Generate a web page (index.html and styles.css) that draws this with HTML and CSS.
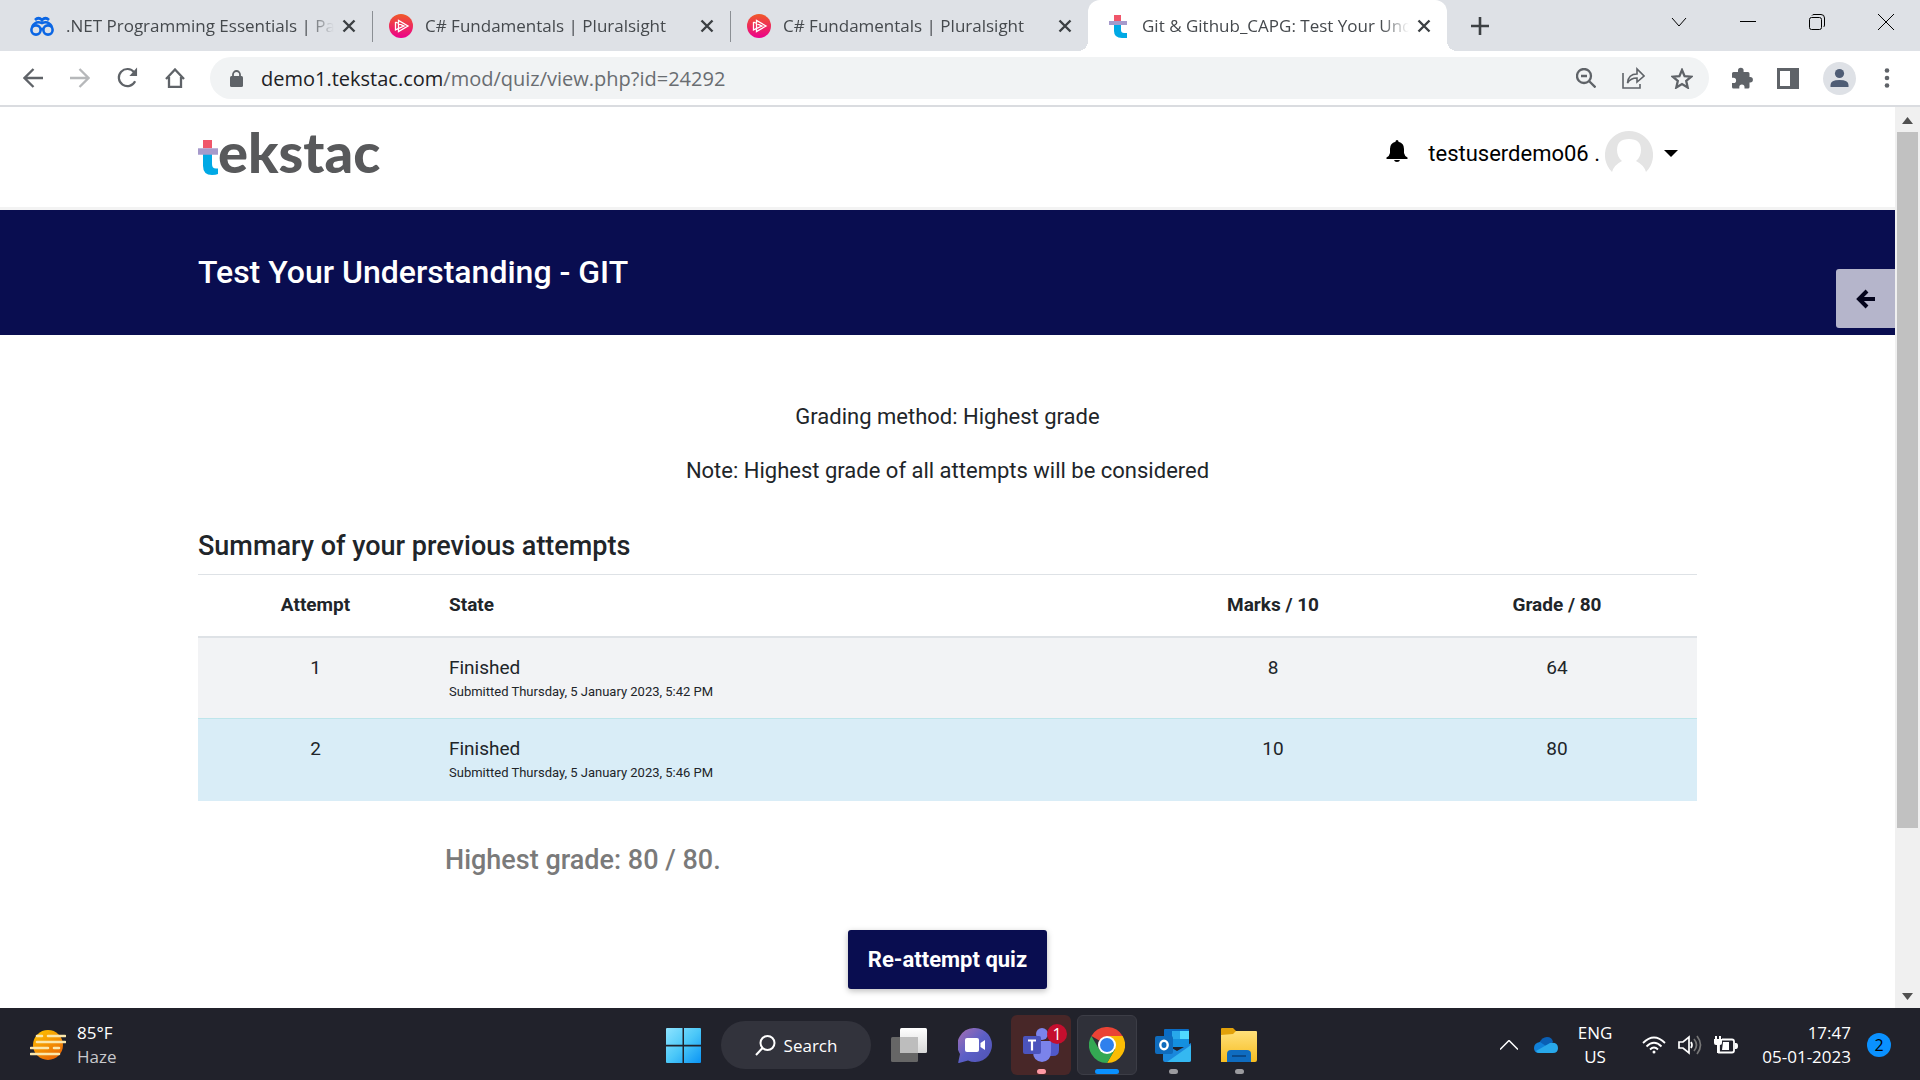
FILE: index.html
```html
<!DOCTYPE html>
<html lang="en">
<head>
<meta charset="utf-8">
<title>Git &amp; Github_CAPG: Test Your Understanding - GIT</title>
<link rel="stylesheet" href="styles.css">
</head>
<body>
<svg width="0" height="0" class="defs" aria-hidden="true">
  <defs>
    <linearGradient id="ps" x1="0" y1="0" x2="0" y2="1"><stop offset="0" stop-color="#f05a28"/><stop offset="1" stop-color="#ec008c"/></linearGradient>
    <linearGradient id="win" gradientUnits="userSpaceOnUse" x1="0" y1="0" x2="35" y2="35"><stop offset="0" stop-color="#8ee4ff"/><stop offset="0.5" stop-color="#4cc8f8"/><stop offset="1" stop-color="#0a94f5"/></linearGradient>
    <linearGradient id="chat" x1="0" y1="0" x2="1" y2="1"><stop offset="0" stop-color="#a86fb0"/><stop offset="0.5" stop-color="#5b5fc7"/><stop offset="1" stop-color="#4f52b2"/></linearGradient>
    <linearGradient id="sun" x1="0" y1="0" x2="0.6" y2="1"><stop offset="0" stop-color="#ffc800"/><stop offset="1" stop-color="#ea6a05"/></linearGradient>
    <linearGradient id="fold" x1="0" y1="0" x2="0" y2="1"><stop offset="0" stop-color="#ffe07a"/><stop offset="1" stop-color="#f7bd20"/></linearGradient>
    <linearGradient id="light" x1="0" y1="0" x2="0" y2="1"><stop offset="0" stop-color="#fff"/><stop offset="1" stop-color="#d8d8d8"/></linearGradient>
    <symbol id="x" viewBox="0 0 14 14"><path d="M1.500 1.500l11 11M12.500 1.500l-11 11" stroke="#3c4043" stroke-width="2.400" fill="none"/></symbol>
    <symbol id="play" viewBox="0 0 24 24"><circle cx="12" cy="12" r="12" fill="url(#ps)"/><path d="M6.500 8v8l3-1.600M9.500 6.500v11L19 12zM6.500 8L15 12l-8.500 4M9.500 9.500l5 2.500-5 2.500" fill="none" stroke="#fff" stroke-width="1.300"/></symbol>
  </defs>
</svg>
<div class="screen">
  <header class="browser">
    <div class="tabs">
      <div class="tab">
        <svg class="fav" viewBox="0 0 24 24" fill="none" stroke="#0b66e4" stroke-width="2.600"><circle cx="6" cy="16" r="4.600"/><circle cx="18" cy="16" r="4.600"/><path d="M10.500 15h3M2 13C4 9 7 7 12 9c5-2 8 0 10 4M5 6c3-3 5-2 7 0 2-2 4-3 7 0"/></svg>
        <span class="tab-title">.NET Programming Essentials | Path</span>
        <button class="bare" aria-label="Close tab"><svg class="x"><use href="#x"/></svg></button>
      </div>
      <div class="tab">
        <svg class="fav"><use href="#play"/></svg>
        <span class="tab-title">C# Fundamentals | Pluralsight</span>
        <button class="bare" aria-label="Close tab"><svg class="x"><use href="#x"/></svg></button>
      </div>
      <div class="tab">
        <svg class="fav"><use href="#play"/></svg>
        <span class="tab-title">C# Fundamentals | Pluralsight</span>
        <button class="bare" aria-label="Close tab"><svg class="x"><use href="#x"/></svg></button>
      </div>
      <div class="tab active">
        <svg class="fav" viewBox="0 0 24 24"><path fill="#f0566a" d="M8 1h7v6H8z"/><path fill="#00a9e5" d="M8 9h7v7q0 3 3 3h3v5h-5q-8 0-8-7z"/><path fill="#a69acb" d="M3 7h18v4H3z"/></svg>
        <span class="tab-title">Git &amp; Github_CAPG: Test Your Understanding</span>
        <button class="bare" aria-label="Close tab"><svg class="x"><use href="#x"/></svg></button>
      </div>
      <button class="bare new-tab" aria-label="New tab"><svg width="18" height="18" viewBox="0 0 18 18"><path d="M9 0v18M0 9h18" stroke="#3c4043" stroke-width="2.600"/></svg></button>
      <div class="window-buttons">
        <button class="bare" aria-label="Search tabs"><svg width="16" height="16" viewBox="0 0 16 16"><path d="M1 4l7 8 7-8" class="thin"/></svg></button>
        <button class="bare" aria-label="Minimize"><svg width="16" height="16" viewBox="0 0 16 16"><path d="M0 7.500h16" class="thin"/></svg></button>
        <button class="bare" aria-label="Restore"><svg width="16" height="16" viewBox="0 0 16 16"><rect x="0.500" y="3.500" width="12" height="12" rx="2" class="thin"/><path d="M3 1.500Q3.500.5 5 .5h7q3.500 0 3.500 3.500v7q0 1.500-1 2" class="thin"/></svg></button>
        <button class="bare" aria-label="Close"><svg width="16" height="16" viewBox="0 0 16 16"><path d="M0 0l16 16M16 0L0 16" class="thin"/></svg></button>
      </div>
    </div>
    <div class="toolbar">
      <div class="nav">
        <button class="bare" aria-label="Back"><svg width="20" height="20" viewBox="0 0 20 20"><path d="M20 10H2M10.500 1L1.500 10l9 9" class="line"/></svg></button>
        <button class="bare faded" aria-label="Forward"><svg width="20" height="20" viewBox="0 0 20 20"><path d="M0 10h18M9.500 1l9 9-9 9" class="line"/></svg></button>
        <button class="bare" aria-label="Reload"><svg width="21" height="22" viewBox="0 0 22 22"><path d="M19 14.500A9 9 0 1 1 18 5" class="line"/><path d="M21 0v9h-8z" fill="#5f6368"/></svg></button>
        <button class="bare" aria-label="Home"><svg width="20" height="20" viewBox="0 0 20 20"><path d="M1 11l9-9.500L19 11M4 9v10h12V9" class="line"/></svg></button>
      </div>
      <div class="omnibox">
        <svg width="13" height="17" viewBox="0 0 13 17"><rect y="6" width="13" height="11" rx="1.500" fill="#5f6368"/><path d="M3 7V4.500a3.500 3.500 0 0 1 7 0V7" fill="none" stroke="#5f6368" stroke-width="1.800"/></svg>
        <span class="url"><b>demo1.tekstac.com</b>/mod/quiz/view.php?id=24292</span>
        <button class="bare" aria-label="Zoom"><svg width="20" height="20" viewBox="0 0 20 20"><circle cx="8" cy="8" r="7" class="line"/><path d="M13 13l6.500 6.500M5 8h6" class="line"/></svg></button>
        <button class="bare" aria-label="Share"><svg width="23" height="22" viewBox="0 0 23 22"><path d="M1 6v15h17v-4M5.500 16C6 10 9 7 15 7V2l7 7-7 6v-4c-4 0-7 1-9.500 5z" fill="none" stroke="#5f6368" stroke-width="1.600"/></svg></button>
        <button class="bare" aria-label="Bookmark"><svg width="22" height="21" viewBox="0 0 22 21"><path d="M11 2l2.600 6.100 6.600.6-5 4.300 1.500 6.500L11 16l-5.700 3.500 1.500-6.500-5-4.300 6.600-.6z" class="line"/></svg></button>
      </div>
      <div class="tools">
        <button class="bare" aria-label="Extensions"><svg width="22" height="22" viewBox="0 0 22 22"><path fill="#5f6368" d="M7 5V3.500a2.800 2.800 0 0 1 5.600 0V5H17q1.500 0 1.500 1.500V10h.7a2.700 2.700 0 0 1 0 5.400h-.7V20q0 1.500-1.500 1.500h-3.500V20a2.600 2.600 0 0 0-5.200 0v1.500H2.500Q1 21.500 1 20v-4h1.500a2.600 2.600 0 0 0 0-5.200H1V6.500Q1 5 2.500 5z"/></svg></button>
        <button class="bare" aria-label="Side panel"><svg width="22" height="21" viewBox="0 0 22 21"><path fill="#5f6368" fill-rule="evenodd" d="M0 0h22v21H0zM3 3v15h10V3z"/></svg></button>
        <button class="bare" aria-label="Profile"><svg width="33" height="33" viewBox="0 0 33 33"><circle cx="16.500" cy="16.500" r="16.500" fill="#dee1e6"/><circle cx="16.500" cy="11.500" r="4.600" fill="#4f5d75"/><path fill="#4f5d75" d="M7.500 25v-2q0-5 9-5t9 5v2z"/></svg></button>
        <button class="bare menu" aria-label="Menu"><svg width="6" height="20" viewBox="0 0 6 20" fill="#5f6368"><circle cx="3" cy="2.500" r="2.300"/><circle cx="3" cy="10" r="2.300"/><circle cx="3" cy="17.500" r="2.300"/></svg></button>
      </div>
    </div>
  </header>

  <div class="viewport">
    <div class="page">
      <header class="site-header">
        <div class="container site-bar">
          <a href="#" class="logo" aria-label="tekstac"><svg width="20" height="35" viewBox="0 0 20 38" preserveAspectRatio="none"><path fill="#f0566a" d="M5 0h9v9H5z"/><path fill="#00a9e5" d="M5 15h9v11q0 5 4 5h2v6q-2 1-6 1-9 0-9-10z"/><path fill="#a69acb" d="M0 9h20v7H0z"/></svg><span>ekstac</span></a>
          <div class="user">
            <button class="bare bell" aria-label="Notifications"><svg width="22" height="22" viewBox="0 0 22 22"><path d="M11 0q1.500 0 1.500 1.800Q18 3 18 9v4q.5 3 3.500 4.500V19H.500v-1.500Q3.500 16 4 13V9q0-6 5.500-7.200Q9.500 0 11 0zM8 20h6q-.5 2-3 2t-3-2z"/></svg></button>
            <button class="bare account"><span>testuserdemo06 .</span><svg width="48" height="44" viewBox="0 0 48 44"><path fill="#e4e4e4" d="M24 0a24 24 0 0 0-17 41q2-7 10-11-5-4-5-11 0-11 12-11t12 11q0 7-5 11 8 4 10 11A24 24 0 0 0 24 0z"/></svg><svg width="14" height="7" viewBox="0 0 14 7"><path d="M0 0h14L7 7z"/></svg></button>
          </div>
        </div>
      </header>
      <div class="banner">
        <div class="container"><h1>Test Your Understanding - GIT</h1></div>
        <button class="drawer" aria-label="Open block drawer"><svg width="20" height="20" viewBox="0 0 20 20" fill="none" stroke="#04041c" stroke-width="4"><path d="M19 10H4M11 2l-8 8 8 8"/></svg></button>
      </div>
      <main class="container content">
        <p class="info">Grading method: Highest grade</p>
        <p class="info">Note: Highest grade of all attempts will be considered</p>
        <h2>Summary of your previous attempts</h2>
        <table>
          <colgroup><col class="c-attempt"><col class="c-state"><col class="c-marks"><col class="c-grade"></colgroup>
          <thead><tr><th>Attempt</th><th class="left">State</th><th>Marks / 10</th><th>Grade / 80</th></tr></thead>
          <tbody>
            <tr><td>1</td><td class="left">Finished<small>Submitted Thursday, 5 January 2023, 5:42 PM</small></td><td>8</td><td>64</td></tr>
            <tr class="best"><td>2</td><td class="left">Finished<small>Submitted Thursday, 5 January 2023, 5:46 PM</small></td><td>10</td><td>80</td></tr>
          </tbody>
        </table>
        <h3>Highest grade: 80 / 80.</h3>
        <button class="primary">Re-attempt quiz</button>
      </main>
    </div>
    <div class="scrollbar" aria-hidden="true">
      <svg width="11" height="7" viewBox="0 0 11 7"><path fill="#505050" d="M0 7h11L5.500 0z"/></svg>
      <div class="track"><div class="thumb"></div></div>
      <svg width="11" height="7" viewBox="0 0 11 7"><path fill="#505050" d="M0 0h11L5.500 7z"/></svg>
    </div>
  </div>

  <footer class="taskbar">
    <div class="weather">
      <svg width="36" height="32" viewBox="0 0 36 32"><circle cx="18" cy="16" r="15" fill="url(#sun)"/><g stroke="#fbe7ab" stroke-width="2.600" stroke-linecap="round"><path d="M7 7h5M18 7h17M7 13h28M1 19h17M24 19h5M1 25h28"/></g></svg>
      <div><div>85°F</div><div class="dim">Haze</div></div>
    </div>
    <div class="apps">
      <button class="app start" aria-label="Start"><svg width="35" height="35" viewBox="0 0 35 35" fill="url(#win)"><path d="M0 1q0-1 1-1h15.500v16.800H0zM18 0h16q1 0 1 1v15.800H18zM0 18.500h16.500V35H1q-1 0-1-1zM18 18.500h17V34q0 1-1 1H18z"/></svg></button>
      <button class="search"><svg width="21" height="21" viewBox="0 0 21 21" fill="none" stroke="#fff" stroke-width="2"><circle cx="12.500" cy="8" r="7"/><path d="M7.500 13L1 20"/></svg><span>Search</span></button>
      <button class="app" aria-label="Task view"><svg width="36" height="34" viewBox="0 0 36 34"><rect y="9" width="27" height="25" rx="1.500" fill="#666"/><rect x="9" width="27" height="25" rx="1.500" fill="url(#light)"/><path fill="#bdbdbd" d="M9 9h18v16H9z"/></svg></button>
      <button class="app" aria-label="Chat"><svg width="34" height="35" viewBox="0 0 34 35"><path fill="url(#chat)" d="M17 0a17 17 0 1 1-7 32.500L1 35q-1 0-.7-1L2 26A17 17 0 0 1 17 0z"/><rect x="7" y="10" width="14" height="14" rx="2" fill="#fff"/><path fill="#fff" d="M22.500 15l4.500-3v10l-4.500-3z"/></svg></button>
      <button class="app teams" aria-label="Teams"><svg width="36" height="34" viewBox="0 0 36 34"><circle cx="19" cy="6" r="6" fill="#7b83eb"/><circle cx="30" cy="9" r="4" fill="#5059c9"/><path fill="#5059c9" d="M26 13h10v9q0 6-6 6h-4z"/><path fill="#7b83eb" d="M10 13h18v11q0 9-9 10-9-1-9-10z"/><rect y="8" width="18" height="18" rx="2" fill="#4b53bc"/><path d="M5 12.500h8M9 12.500v10" stroke="#fff" stroke-width="2.200"/></svg><span class="badge">1</span></button>
      <button class="app current" aria-label="Chrome"><svg width="36" height="36" viewBox="0 0 36 36"><path fill="#ea4335" d="M18 18L2.400 9A18 18 0 0 1 33.600 9z"/><path fill="#fbbc04" d="M18 9h15.600A18 18 0 0 1 18 36l7.800-13.500z"/><path fill="#34a853" d="M2.400 9l7.800 13.500L18 27l7.800-4.500L18 36A18 18 0 0 1 2.400 9z"/><circle cx="18" cy="18" r="9" fill="#fff"/><circle cx="18" cy="18" r="7" fill="#2f80ed"/></svg></button>
      <button class="app run" aria-label="Outlook"><svg width="36" height="33" viewBox="0 0 36 33"><path fill="#0a6cc4" d="M10 0h23q1 0 1 1v16H9V1q0-1 1-1z"/><path fill="#28a8ea" d="M17 2h8v8h-8z"/><path fill="#50d9ff" d="M25 2h9v8h-9z"/><path fill="#1490df" d="M17 10h17v8H17z"/><path fill="#1a88dc" d="M8 14l14 8 14-8v17q0 2-2 2H10q-2 0-2-2z"/><path fill="#35b8f1" d="M36 16v15q0 2-2 2H12z"/><rect y="7" width="18" height="18" rx="2" fill="#0f6cbd"/><ellipse cx="9" cy="16" rx="3.700" ry="4.200" fill="none" stroke="#fff" stroke-width="2.400"/></svg></button>
      <button class="app run" aria-label="File Explorer"><svg width="36" height="34" viewBox="0 0 36 34"><path fill="#e2a10a" d="M0 1q0-1 1-1h11l4 4v4H0z"/><path fill="url(#fold)" d="M0 7l12-1 3-3h20q1 0 1 1v28q0 2-2 2H0z"/><path fill="#0f6cc0" d="M6 34V26q0-4 4-4h16q4 0 4 4v8z"/><path d="M11 28h14" stroke="#0a4a8a" stroke-width="2"/></svg></button>
    </div>
    <div class="tray">
      <button class="bare" aria-label="Show hidden icons"><svg width="18" height="10" viewBox="0 0 18 10"><path d="M0 9.500l9-9 9 9" stroke="#fff" stroke-width="1.500" fill="none"/></svg></button>
      <svg width="24" height="16" viewBox="0 0 24 16"><path fill="#0a5fb4" d="M5 6q3-6 8-6 5 0 6 5l-7 5z"/><path fill="#1080d8" d="M12 9L6 5q-6 1-6 6 0 5 5 5h4z"/><path fill="#28a8ea" d="M2 14L16 6q8-1 8 5 0 5-5 5H5q-2 0-3-2z"/></svg>
      <div class="lang">ENG<br>US</div>
      <div class="status">
        <svg width="24" height="18" viewBox="0 0 24 18" fill="none" stroke="#fff" stroke-width="1.800"><path d="M1 7q11-11 22 0M4.500 10.500q7.500-7.500 15 0M8 13.500q4-4 8 0"/><circle cx="12" cy="16" r="1.500" fill="#fff" stroke="none"/></svg>
        <svg width="24" height="20" viewBox="0 0 24 20" fill="none" stroke="#fff" stroke-width="1.700"><path d="M1 7h4l6-5v16l-6-5H1zM13 7q2 3 0 6"/><path stroke="#777" d="M16 4q5 6 0 12M19 1q7 9 0 18"/></svg>
        <svg width="24" height="19" viewBox="0 0 24 19"><path d="M8 3.500h10q2 0 2 2v9q0 2-2 2H5V8" fill="none" stroke="#fff" stroke-width="1.800"/><path fill="#fff" d="M9 6h6v8H8zM21 7h1q2 0 2 3t-2 3h-1zM0 3h8v4q0 2-2 2H2Q0 9 0 7zM1 0h2v4H1zM5 0h2v4H5zM3 8h2v9H3z"/></svg>
      </div>
      <div class="clock">17:47<br>05-01-2023</div>
      <span class="count">2</span>
    </div>
  </footer>
</div>
</body>
</html>
```
FILE: styles.css
```css
* { box-sizing: border-box; }
body { margin: 0; font-family: "Open Sans", sans-serif; }
.defs { position: absolute; }
svg { display: block; flex: none; }
.screen { display: flex; flex-direction: column; height: 100vh; overflow: hidden; }
.bare { border: 0; padding: 0; background: none; font: inherit; color: inherit; }
.thin { fill: none; stroke: #000; stroke-width: 1; }
.line { fill: none; stroke: #5f6368; stroke-width: 2.3; }

/* Browser chrome */
.browser { flex: none; border-bottom: 2px solid #dadce0; background: #fff; }
.tabs { display: flex; height: 51px; background: #dee1e6; }
.tab { position: relative; display: flex; align-items: center; gap: 12px; flex: 0 1 358px; min-width: 0; padding: 0 16px 0 30px; color: #45494d; font-size: 17px; }
.tab:first-child { flex-basis: 372px; }
.tab:nth-child(2), .tab:nth-child(3) { border-left: 1px solid #8b8f94; border-image: linear-gradient(#0000 12px, #8b8f94 12px, #8b8f94 41px, #0000 41px) 1; padding-left: 16px; }
.tab.active { padding-left: 18px; flex-basis: 359px; background: #fff; border-radius: 12px 12px 0 0; }
.tab.active::before, .tab.active::after { content: ""; position: absolute; bottom: 0; width: 10px; height: 10px; }
.tab.active::before { right: 100%; background: radial-gradient(circle at 0 0, #dee1e6 10px, #fff 10px); }
.tab.active::after { left: 100%; background: radial-gradient(circle at 100% 0, #dee1e6 10px, #fff 10px); }
.fav { width: 24px; height: 24px; }
.tab-title { flex: 1; margin-right: -4px; overflow: hidden; white-space: nowrap; mask-image: linear-gradient(to left, transparent, #000 28px); }
.x { width: 14px; height: 14px; }
.new-tab { margin-left: 24px; }
.window-buttons { display: flex; gap: 53px; margin-left: auto; padding: 14px 26px 0 0; align-items: flex-start; }
.toolbar { display: flex; align-items: center; height: 54px; padding: 0 30px 0 23px; }
.nav { display: flex; gap: 27px; width: 187px; align-items: center; }
.faded { opacity: 0.45; }
.omnibox { display: flex; flex: 1; align-items: center; gap: 26px; height: 42px; padding: 0 16px 0 20px; border-radius: 21px; background: #f1f3f4; }
.url { flex: 1; margin-left: -8px; color: #696d71; font-size: 20px; }
.url b { color: #202124; font-weight: 400; }
.tools { display: flex; align-items: center; gap: 24px; margin-left: 22px; }
.menu { margin-left: 4px; }

/* Site */
.viewport { display: flex; flex: 1; min-height: 0; }
.page { flex: 1; min-width: 0; overflow: hidden; font-family: Roboto, sans-serif; color: #212529; background: #fff; }
.container { width: 80%; max-width: 1499px; margin: 0 auto; }
.site-header { height: 103px; border-bottom: 3px solid #f3f3f3; }
.site-bar { display: flex; justify-content: space-between; }
.logo { display: flex; align-items: flex-end; height: 68px; color: #58595b; font-family: Lato, sans-serif; font-weight: 900; font-size: 56px; line-height: 46px; text-decoration: none; }
.user { display: flex; align-items: center; gap: 20px; padding: 24px 19px 0 0; height: 68px; color: #000; font-size: 22px; }
.bell { padding-bottom: 4px; }
.account { display: flex; align-items: center; gap: 11px; }
.account span { margin-right: -6px; }
.banner { position: relative; display: flex; align-items: center; height: 125px; background: #090d50; color: #fff; }
.drawer { position: absolute; right: 0; top: 59px; width: 59px; height: 59px; display: grid; place-items: center; border: 0; border-radius: 3px 0 0 3px; background: #b5b5cb; }
h1, h2, h3 { margin: 0; font-weight: 500; }
h1 { font-size: 32px; line-height: 38px; padding-bottom: 2px; }
.content { padding-top: 65px; }
.info { margin: 0 0 20px; text-align: center; font-size: 22px; line-height: 34px; }
h2 { margin-top: 40px; font-size: 27px; line-height: 36px; }
table { width: 100%; margin-top: 10px; border-collapse: collapse; table-layout: fixed; font-size: 19px; line-height: 28px; }
.c-attempt { width: 235px; }
.c-marks { width: 288px; }
.c-grade { width: 280px; }
th, td { padding: 16px; text-align: center; vertical-align: top; }
th { height: 62px; border-top: 1px solid #dee2e6; border-bottom: 2px solid #dee2e6; font-weight: 700; }
td { height: 82px; }
.left { text-align: left; }
small { display: block; font-size: 13px; line-height: 20px; }
tbody tr { background: #f2f3f5; }
tbody .best { background: #d9edf7; border-top: 1px solid #bee5eb; }
h3 { margin: 41px 0 52px 247px; font-size: 27px; line-height: 36px; color: #7a7a7a; }
.primary { display: block; margin: 0 auto; height: 59px; padding: 0 20px; border: 0; border-radius: 3px; background: #090d50; box-shadow: 0 2px 6px #0004; color: #fff; font: 700 22px Roboto, sans-serif; }
.scrollbar { display: flex; flex-direction: column; align-items: center; width: 25px; padding: 10px 0 8px; background: #f0f0f0; }
.track { flex: 1; width: 21px; margin: 8px 0; }
.thumb { height: 81.6%; background: #c1c1c1; }

/* Taskbar */
.taskbar { display: grid; grid-template-columns: 1fr auto 1fr; align-items: center; flex: none; height: 72px; padding-top: 2px; background: #21222b; color: #fff; font-size: 17px; line-height: 24px; }
.weather { display: flex; gap: 11px; padding-left: 30px; align-items: center; }
.dim { color: #c8c8cc; }
.apps { display: flex; align-items: center; gap: 6px; padding-left: 2px; }
.app { position: relative; display: grid; place-items: center; width: 60px; height: 60px; padding: 0; border: 1px solid transparent; border-radius: 6px; background: none; }
.start { margin-right: 2px; }
.search { display: flex; align-items: center; justify-content: center; gap: 8px; width: 150px; height: 48px; margin-right: 2px; border: 0; border-radius: 24px; background: #32333c; color: #fff; font: 17px "Open Sans", sans-serif; }
.teams { background: #482728; }
.current { background: #2f3039; border-color: #3c3d46; }
.teams::after, .run::after, .current::after { content: ""; position: absolute; bottom: 0; left: 25px; width: 9px; height: 5px; border-radius: 3px; background: #9b9b9f; }
.teams::after { background: #ff99a4; }
.current::after { left: 17px; width: 24px; background: #0a91ff; }
.badge { position: absolute; top: 8px; right: 3px; width: 20px; height: 20px; border-radius: 10px; background: #c50f2e; color: #fff; font: 16px/20px "Open Sans", sans-serif; text-align: center; }
.tray { display: flex; justify-content: flex-end; align-items: center; gap: 16px; padding-right: 29px; }
.lang { margin: 0 14px 0 4px; text-align: center; }
.status { display: flex; gap: 12px; align-items: center; }
.clock { margin-left: 8px; text-align: right; }
.count { width: 24px; height: 24px; border-radius: 12px; background: #0a91ff; color: #000; text-align: center; font-size: 16px; }
```
